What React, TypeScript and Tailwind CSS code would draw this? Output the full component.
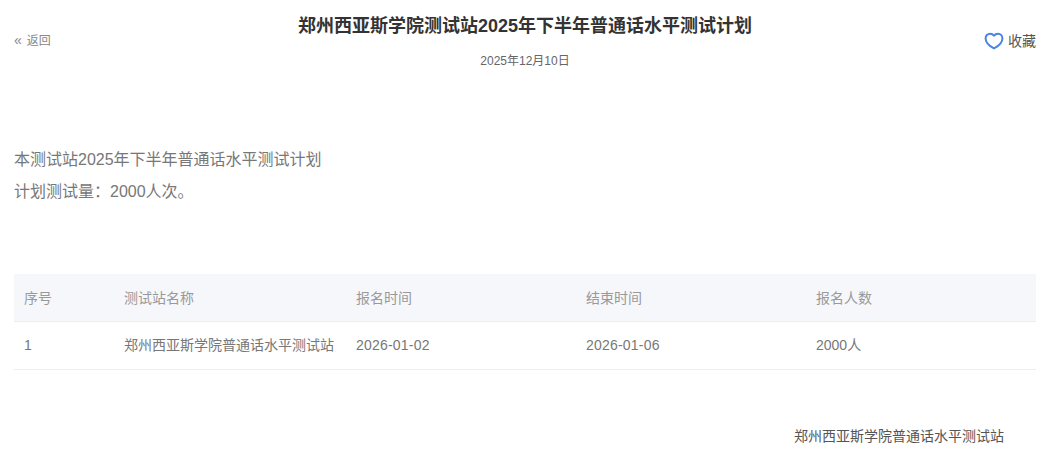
const FONT = "font-['Helvetica_Neue','Liberation_Sans','Noto_Sans_CJK_SC',sans-serif]";

const rows = [
  {
    id: "1",
    name: "郑州西亚斯学院普通话水平测试站",
    start: "2026-01-02",
    end: "2026-01-06",
    count: "2000人",
  },
];

const HeartIcon = () => (
  <svg width="20" height="18" viewBox="0 0 20 18" fill="none">
    <path
      d="M10 16.4C6.6 14.6 1.6 11.2 1.6 6.4C1.6 3.6 3.6 1.8 6.1 1.8C7.8 1.8 9.1 2.5 10 3.8C10.9 2.5 12.2 1.8 13.9 1.8C16.4 1.8 18.4 3.6 18.4 6.4C18.4 11.2 13.4 14.6 10 16.4Z"
      stroke="#4a86e0"
      strokeWidth="2"
      strokeLinejoin="round"
    />
  </svg>
);

export default function App() {
  return (
    <div className={`${FONT} h-[476px] w-[1048px] overflow-hidden bg-white pr-3 pl-3.5 text-[#777]`}>
      <header className="relative flex h-[81px] items-start justify-between">
        <a className="mt-[33px] flex gap-[5px] text-xs leading-4 text-[#888]">
          <span className="text-sm leading-[15px]">«</span>
          <span>返回</span>
        </a>
        <div className="absolute inset-x-0 top-0 flex flex-col items-center">
          <h1 className="mt-[14px] text-lg leading-6 font-bold text-[#333]">
            郑州西亚斯学院测试站2025年下半年普通话水平测试计划
          </h1>
          <p className="mt-[15px] text-xs leading-4 text-[#666]">2025年12月10日</p>
        </div>
        <button className="relative mt-[31px] flex items-center gap-1 text-sm leading-5 text-[#555]">
          <HeartIcon />
          收藏
        </button>
      </header>

      <section className="mt-[63px] text-base leading-8 text-[#777]">
        <p>本测试站2025年下半年普通话水平测试计划</p>
        <p>计划测试量：2000人次。</p>
      </section>

      <table className="mt-[66px] w-full table-fixed border-collapse text-sm">
        <thead>
          <tr className="h-[47px] border-b border-[#eceef2] bg-[#f6f7fb] text-left text-[#999]">
            <th className="w-[100px] pt-px pl-2.5 font-normal">序号</th>
            <th className="w-[232px] pt-px pl-2.5 font-normal">测试站名称</th>
            <th className="w-[230px] pt-px pl-2.5 font-normal">报名时间</th>
            <th className="w-[230px] pt-px pl-2.5 font-normal">结束时间</th>
            <th className="pt-px pl-2.5 font-normal">报名人数</th>
          </tr>
        </thead>
        <tbody>
          {rows.map((row) => (
            <tr key={row.id} className="h-[48px] border-b border-[#eceef2] text-[#777]">
              <td className="pl-2.5">{row.id}</td>
              <td className="pl-2.5 whitespace-nowrap">{row.name}</td>
              <td className="pl-2.5 tracking-[0.2px]">{row.start}</td>
              <td className="pl-2.5 tracking-[0.2px]">{row.end}</td>
              <td className="pl-2.5">{row.count}</td>
            </tr>
          ))}
        </tbody>
      </table>

      <footer className="mt-[56px] pr-8 text-right text-sm leading-5 text-[#555]">
        郑州西亚斯学院普通话水平测试站
      </footer>
    </div>
  );
}
